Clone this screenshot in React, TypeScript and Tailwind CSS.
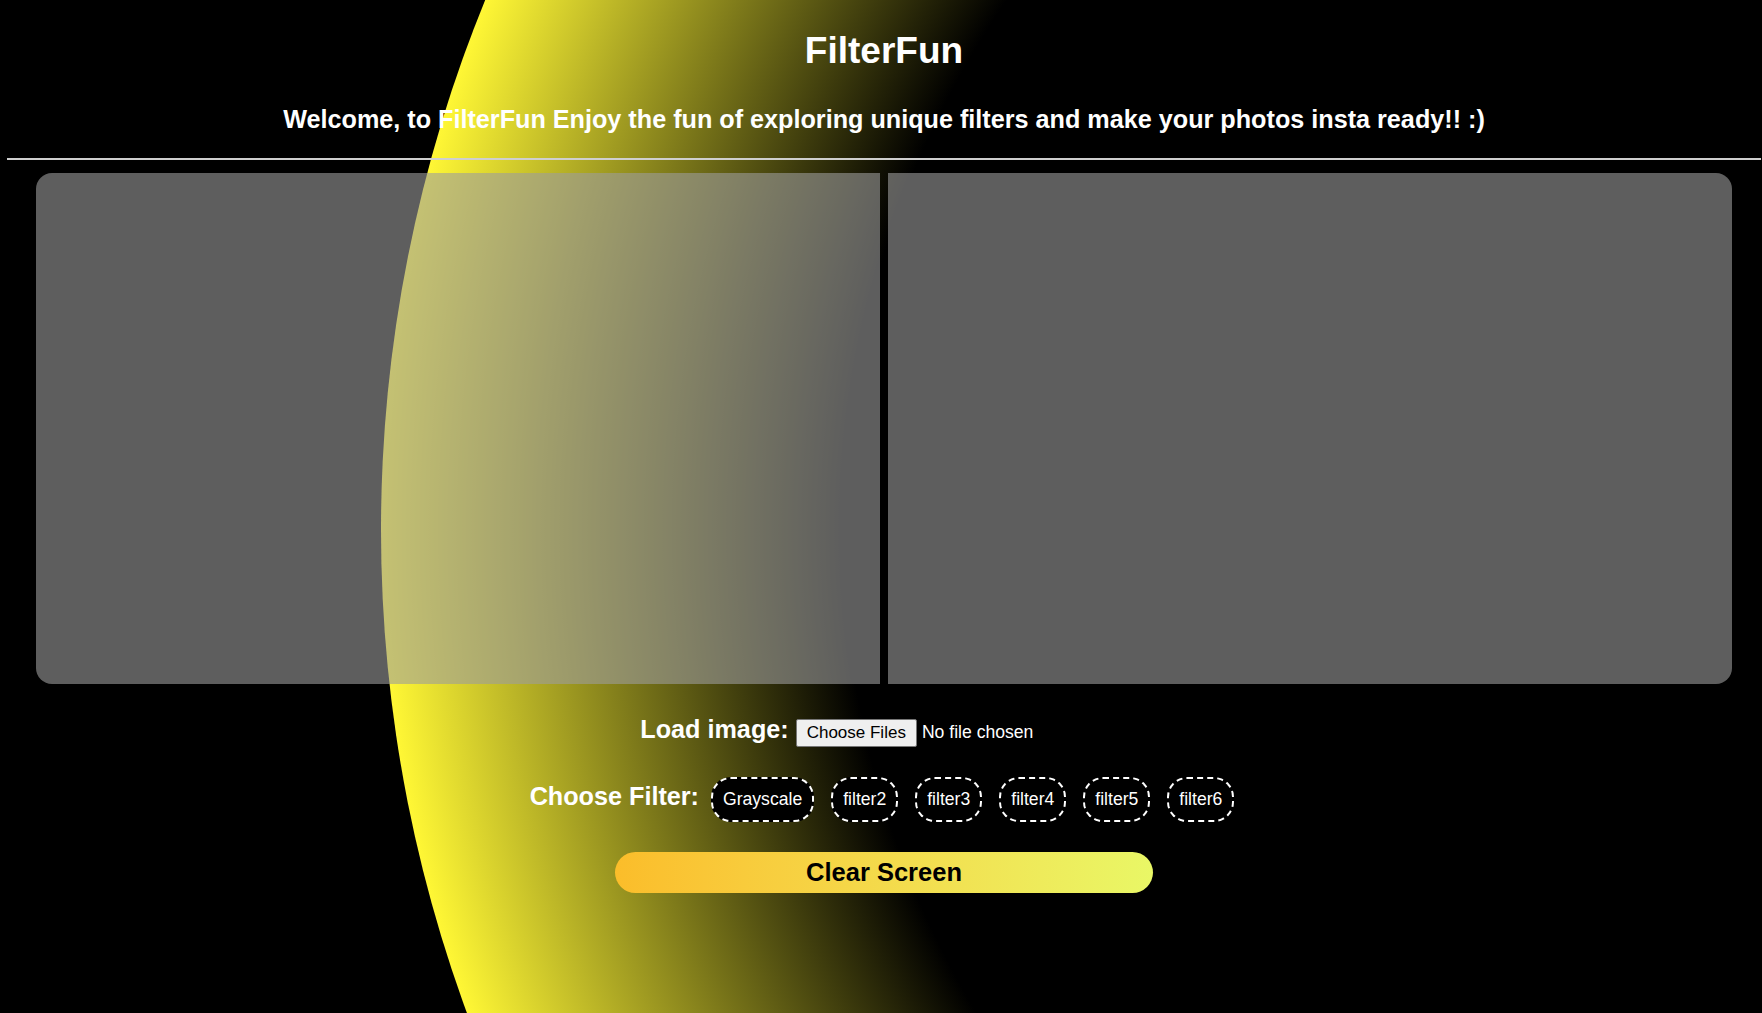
import { useState } from "react";

const filters = ["Grayscale", "filter2", "filter3", "filter4", "filter5", "filter6"];

export default function App() {
  const [active, setActive] = useState<string | null>(null);

  return (
    <div className="relative h-screen overflow-hidden bg-black font-['Liberation_Sans',Arial,sans-serif] text-white">
      {/* big glowing disc in the background */}
      <div className="pointer-events-none absolute left-[381px] top-[-870px] h-[2800px] w-[2800px] rounded-full bg-[radial-gradient(circle_closest-side,#000_67%,#fff735_100%)]" />

      <div className="relative flex flex-col items-center pl-[7px] pr-px">
        <h1 className="mt-[29px] text-[37px] font-bold leading-[43px]">FilterFun</h1>
        <h2 className="mt-[33px] text-[25.2px] font-bold leading-[29px]">
          Welcome, to FilterFun Enjoy the fun of exploring unique filters and make your photos insta ready!! :)
        </h2>

        <hr className="mt-[24px] w-full border-t-2 border-[#cfcfcf]" />

        {/* canvases */}
        <div className="mt-[13px] flex w-full gap-[8px] px-[29px]">
          <div className="h-[511px] flex-1 rounded-l-[16px] bg-[rgba(156,156,156,0.6)]" />
          <div className="h-[511px] flex-1 rounded-r-[16px] bg-[rgba(156,156,156,0.6)]" />
        </div>

        <div className="mt-[31px] flex items-baseline">
          <label className="mr-[7px] text-[25.2px] font-bold leading-[29px]">Load image:</label>
          <input
            type="file"
            multiple
            accept="image/*"
            className="w-[332px] text-[17.6px] text-white file:mr-[5px] file:rounded-[2px] file:border file:border-[#767676] file:bg-[#efefef] file:px-[10px] file:py-[3px] file:text-[17px] file:leading-[20px] file:text-black"
          />
        </div>

        <div className="mt-[30px] flex items-baseline pr-[4px]">
          <span className="mr-[12px] text-[25.2px] font-bold leading-[29px]">Choose Filter:</span>
          <div className="flex items-baseline gap-[17px]">
            {filters.map((f) => (
              <button
                key={f}
                onClick={() => setActive(f)}
                className={
                  "rounded-[20px] border-2 border-dashed border-white bg-black px-[10px] py-[10px] text-[17.6px] leading-[21px] text-white" +
                  (active === f ? " border-solid" : "")
                }
              >
                {f}
              </button>
            ))}
          </div>
        </div>

        <button className="mt-[30px] w-[538px] rounded-full bg-gradient-to-r from-[#fbbd2a] to-[#e9f766] py-[6px] text-[25.5px] font-bold leading-[29px] text-black">
          Clear Screen
        </button>
      </div>
    </div>
  );
}
